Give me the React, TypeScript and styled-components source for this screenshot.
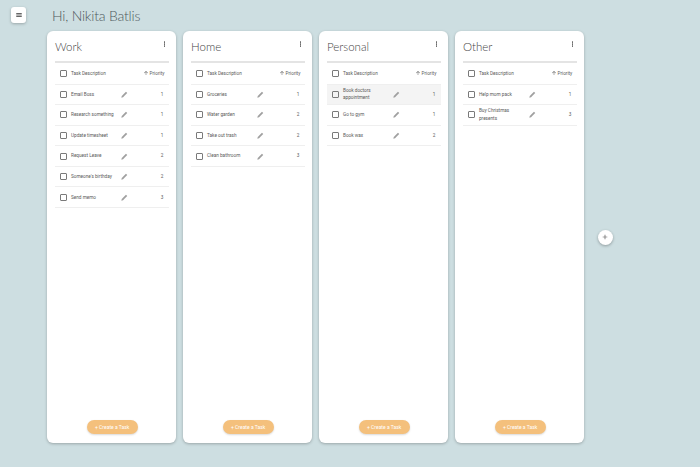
import React from 'react';
import styled, { createGlobalStyle } from 'styled-components';

const GlobalStyle = createGlobalStyle`
  html, body {
    margin: 0;
    height: 100%;
    background: #cddee1;
    font-family: Roboto, "Liberation Sans", sans-serif;
  }
`;

const Page = styled.div`
  width: 700px;
  height: 467px;
  display: flex;
  overflow: hidden;
`;

const Rail = styled.div`
  width: 47px;
  padding: 7px 0 0 11px;
  box-sizing: border-box;
  flex: none;
`;

const MenuButton = styled.button`
  width: 15px;
  height: 16px;
  padding: 0;
  border: none;
  border-radius: 3px;
  background: #fff;
  color: #666;
  display: flex;
  align-items: center;
  justify-content: center;
  box-shadow: 0 1px 3px rgba(0, 0, 0, 0.25);
`;

const Main = styled.div`
  flex: 1;
  display: flex;
  flex-direction: column;
`;

const Greeting = styled.h1`
  margin: 0;
  height: 31px;
  padding: 7px 0 0 5px;
  box-sizing: border-box;
  font-family: Lato, sans-serif;
  font-weight: 300;
  font-size: 14px;
  line-height: 18px;
  letter-spacing: -0.2px;
  color: #4f5a5d;
`;

const Board = styled.div`
  display: flex;
  align-items: center;
  gap: 6.6px;
`;

const Card = styled.section`
  width: 129.4px;
  height: 412px;
  padding: 0 7px 0 8px;
  box-sizing: border-box;
  flex: none;
  display: flex;
  flex-direction: column;
  background: #fff;
  border-radius: 6px;
  box-shadow: 0 1px 3px rgba(0, 0, 0, 0.25);
`;

const CardHead = styled.header`
  height: 30px;
  flex: none;
  display: flex;
  justify-content: space-between;
  border-bottom: 2px solid #e4e4e4;
`;

const CardTitle = styled.h2`
  margin: 0;
  padding-top: 8px;
  font-family: Lato, sans-serif;
  font-weight: 300;
  font-size: 11.5px;
  line-height: 15px;
  color: #454545;
`;

const MoreButton = styled.span`
  margin: 10px 4px 0 0;
  display: flex;
  flex-direction: column;
  gap: 0.6px;
`;

const Dot = styled.i`
  width: 1.5px;
  height: 1.5px;
  border-radius: 50%;
  background: #666;
`;

const Row = styled.div<{ $head?: boolean; $hover?: boolean }>`
  height: ${(p) => (p.$head ? '21.5px' : '20.6px')};
  padding: 0 5px;
  box-sizing: border-box;
  flex: none;
  display: flex;
  align-items: center;
  background: ${(p) => (p.$hover ? '#f4f4f4' : 'transparent')};
  border-bottom: 1px solid #efefef;
  font-size: 4.7px;
  line-height: 7.4px;
  color: #5a5a5a;
`;

const Check = styled.span`
  width: 5px;
  height: 5px;
  flex: none;
  margin-right: 4px;
  border: 1px solid #7a7a7a;
  border-radius: 1px;
`;

const Description = styled.span`
  width: 50px;
  padding-right: 4px;
  box-sizing: border-box;
  flex: none;
`;

const HeadDescription = styled.span`
  flex: 1;
`;

const Edit = styled.span`
  width: 10px;
  flex: none;
  display: flex;
  color: #a0a0a0;
`;

const Priority = styled.span`
  flex: 1;
  padding-right: 1px;
  text-align: right;
`;

const HeadPriority = styled.span`
  display: flex;
  align-items: center;
  gap: 1px;
`;

const Foot = styled.div`
  margin-top: auto;
  padding-bottom: 9px;
  display: flex;
  justify-content: center;
`;

const CreateButton = styled.button`
  width: 51px;
  height: 14px;
  padding: 0;
  border: none;
  border-radius: 7px;
  background: #f4c07c;
  color: #fff;
  font-family: Roboto, sans-serif;
  font-size: 5px;
  box-shadow: 0 1px 2px rgba(0, 0, 0, 0.15);
`;

const AddColumn = styled.button`
  width: 15px;
  height: 15px;
  margin-left: 7px;
  padding: 0;
  border: none;
  border-radius: 50%;
  background: #fff;
  color: #555;
  display: flex;
  align-items: center;
  justify-content: center;
  box-shadow: 0 1px 3px rgba(0, 0, 0, 0.3);
`;

const columns = [
  {
    title: 'Work',
    tasks: [
      ['Email Boss', 1],
      ['Research something', 1],
      ['Update timesheet', 1],
      ['Request Leave', 2],
      ["Someone's birthday", 2],
      ['Send memo', 3],
    ],
  },
  {
    title: 'Home',
    tasks: [
      ['Groceries', 1],
      ['Water garden', 2],
      ['Take out trash', 2],
      ['Clean bathroom', 3],
    ],
  },
  {
    title: 'Personal',
    hover: 0,
    tasks: [
      ['Book doctors appointment', 1],
      ['Go to gym', 1],
      ['Book wax', 2],
    ],
  },
  {
    title: 'Other',
    tasks: [
      ['Help mom pack', 1],
      ['Buy Christmas presents', 3],
    ],
  },
];

const Pencil = () => (
  <svg width="7" height="7" viewBox="0 0 24 24" fill="currentColor">
    <path d="M1 23l1.5-6L17 2.5l4.5 4.5L7 21.5z" />
  </svg>
);

function App() {
  return (
    <Page>
      <GlobalStyle />
      <Rail>
        <MenuButton>
          <svg width="6" height="6" viewBox="0 0 24 24" fill="currentColor">
            <path d="M1 4h22v4H1zm0 6h22v4H1zm0 6h22v4H1z" />
          </svg>
        </MenuButton>
      </Rail>
      <Main>
        <Greeting>Hi, Nikita Batlis</Greeting>
        <Board>
          {columns.map((col) => (
            <Card key={col.title}>
              <CardHead>
                <CardTitle>{col.title}</CardTitle>
                <MoreButton>
                  <Dot />
                  <Dot />
                  <Dot />
                </MoreButton>
              </CardHead>
              <Row $head>
                <Check />
                <HeadDescription>Task Description</HeadDescription>
                <HeadPriority>
                  <svg width="6" height="6" viewBox="0 0 24 24" fill="currentColor">
                    <path d="M4 12l1.41 1.41L11 7.83V20h2V7.83l5.58 5.59L20 12l-8-8-8 8z" />
                  </svg>
                  Priority
                </HeadPriority>
              </Row>
              {col.tasks.map(([name, priority], i) => (
                <Row key={name} $hover={col.hover === i}>
                  <Check />
                  <Description>{name}</Description>
                  <Edit>
                    <Pencil />
                  </Edit>
                  <Priority>{priority}</Priority>
                </Row>
              ))}
              <Foot>
                <CreateButton>+ Create a Task</CreateButton>
              </Foot>
            </Card>
          ))}
          <AddColumn>
            <svg width="8" height="8" viewBox="0 0 24 24" fill="currentColor">
              <path d="M19 13h-6v6h-2v-6H5v-2h6V5h2v6h6v2z" />
            </svg>
          </AddColumn>
        </Board>
      </Main>
    </Page>
  );
}

export default App;
